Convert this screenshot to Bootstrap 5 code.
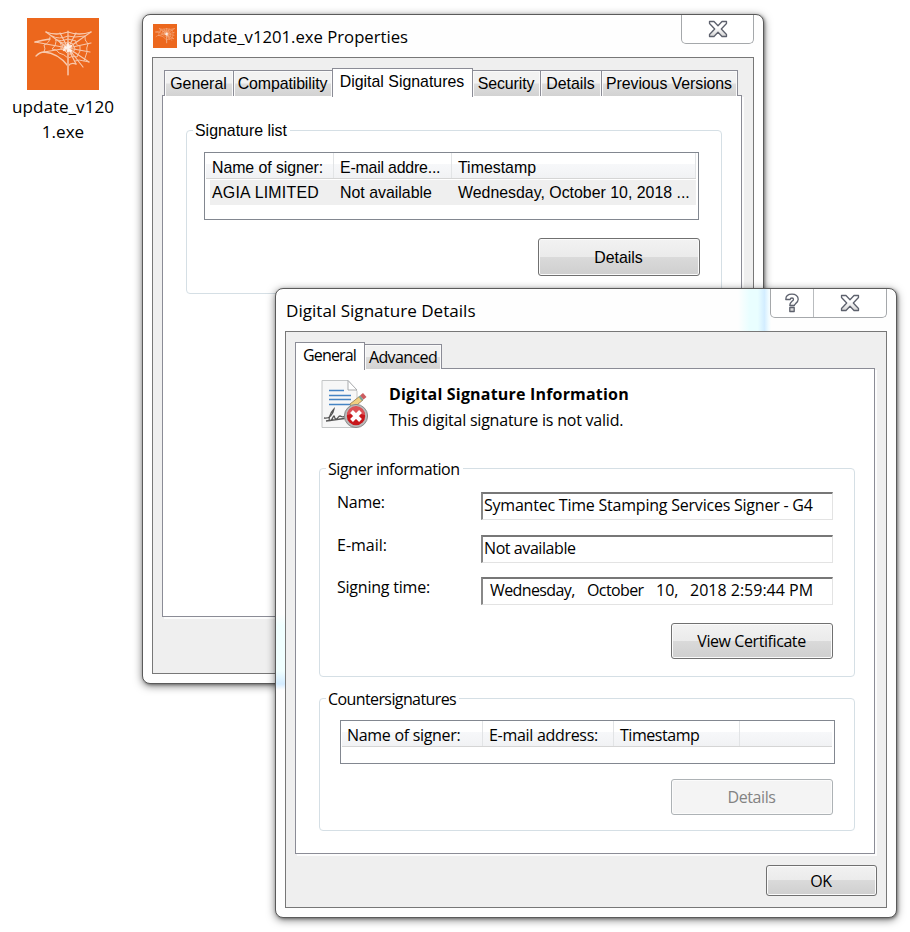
<!DOCTYPE html>
<html lang="en">
<head>
<meta charset="utf-8">
<meta name="viewport" content="width=device-width, initial-scale=1">
<title>Digital Signature Details</title>
<link href="https://cdn.jsdelivr.net/npm/bootstrap@5.3.0/dist/css/bootstrap.min.css" rel="stylesheet">
<style>
  body { width: 910px; height: 932px; overflow: hidden; background: #fff; color: #000; font: 16px/20px "Open Sans", "Noto Sans", sans-serif; }
  /* desktop */
  .shortcut { left: 8px; top: 18px; width: 110px; font: 17.1px/25px "Open Sans", sans-serif; }
  .shortcut-label { margin-top: 4px; }
  /* window chrome */
  .win { border: 1px solid #5a5a5a; border-radius: 8px; background: #fefefe; box-shadow: 0 2px 8px rgba(0,0,0,.5), 1px 1px 3px rgba(0,0,0,.35); padding: 0 9px 9px; width: 622px; }
  .win-props { left: 142px; top: 14px; height: 670px; }
  .win-sig { left: 275px; top: 288px; height: 630px;
    background:
      linear-gradient(90deg, transparent, #e9feff 35%, #e9feff 60%, #d3edff 80%, #effbff 92%, transparent) 462px 0 / 33px 43px no-repeat,
      linear-gradient(180deg, transparent, #f0ffff 15%, #f0ffff 75%, #d3ebff 92%, transparent) 0 325px / 10px 76px no-repeat,
      #fefefe; }
  .titlebar { height: 42px; font-size: 17.1px; line-height: 24px; }
  .titlebar-text { padding-top: 10px; }
  .win-props .titlebar-text { font-size: 16.7px; padding-left: 5px; }
  .win-sig .titlebar-text { padding-left: 1px; }
  .caption-btns { border: 1px solid #a5a8ab; border-top: 0; border-radius: 0 0 5px 5px; height: 29px; background: rgba(255,255,255,.75); }
  .cap-close { width: 71px; height: 28px; }
  .win-sig .cap-close { width: 72px; }
  .cap-help { width: 43px; height: 28px; border-right: 1px solid #b9bcbf; }
  .client { border: 1px solid #777; background: #efefef; padding: 10px 9px 0; flex: 1; }
  /* tabs */
  .tab-strip { height: 27px; margin-bottom: -1px; }
  .tab-item { border: 1px solid #8b8c96; border-bottom: 0; background: linear-gradient(#f2f2f2 0 48%, #dedede 52%, #d2d2d2); box-shadow: inset 1px 1px #fafafa, inset -1px 0 #fafafa; height: 25px; text-align: center; padding: 2px 1px 0 0; margin-right: -1px; white-space: nowrap; }
  .tab-on { height: 28px; background: #fff; z-index: 1; box-shadow: none; padding-top: 3px; }
  .tab-page { width: 580px; border: 1px solid #8b8c96; background: #fff; box-shadow: 2px 2px #fcfcfc; padding: 0 19px 0 23px; }
  .groupbox { width: 536px; border: 1px solid #d5dfe5; border-radius: 4px; }
  .group-title { display: block; width: max-content; margin: -10px 0 0 6px; padding: 0 3px 0 2px; background: #fff; }
  /* buttons */
  .win-btn { border: 1px solid #707070; border-radius: 3px; width: 162px; height: 36px; padding: 0 1px 0 0; background: linear-gradient(#f2f2f2, #ebebeb 49%, #dadada 50%, #cfcfcf); box-shadow: inset 0 0 0 1px #fbfbfb; font: inherit; color: #000; }
  .win-btn:disabled { background: #f4f4f4; border-color: #adb2b5; color: #838383; opacity: 1; }
  /* list views */
  .listview { width: 495px; border: 1px solid #828790; background: #fff; padding: 0 2px 0 1px; overflow: hidden; }
  .list-head { height: 26px; border-bottom: 1px solid #d5d5d5; background: linear-gradient(#fff 42%, #f7f8fa 43%, #f1f2f4); }
  .list-head > div { border-right: 1px solid #e2e4e6; padding-left: 6px; padding-top: 4px; white-space: nowrap; }
  .list-row { height: 25px; background: #efefef; margin: 1px 0 0 4px; padding-top: 3px; white-space: nowrap; }
  /* the properties window uses the wider system face */
  .arial { font-family: "Liberation Sans", Arial, sans-serif; font-size: 15.9px; }
  .arial .tab-strip { height: 28px; }
  .arial .tab-item { height: 26px; padding-top: 3px; }
  .arial .tab-on { height: 29px; }
  .arial .list-head > div { padding-top: 5px; }
  .arial .win-btn { padding-top: 2px; }
  .field { width: 352px; height: 28px; border: solid; border-width: 2px 1px 1px 2px; border-color: #777 #e3e3e3 #e3e3e3 #888; padding: 1px 0 0 1px; white-space: pre; }
  .field-label { width: 144px; }
  .sp2 { letter-spacing: -.22px; }
  .sp4 { letter-spacing: -.42px; }
  .sp6 { letter-spacing: -.6px; }
  .sp8 { letter-spacing: -.85px; }
</style>
<script src="https://cdn.jsdelivr.net/npm/bootstrap@5.3.0/dist/js/bootstrap.bundle.min.js"></script>
</head>
<body class="position-relative">
<svg width="0" height="0" class="position-absolute">
  <defs>
    <linearGradient id="glyphFill" x1="0" y1="0" x2="0" y2="1"><stop offset=".4" stop-color="#fff"/><stop offset="1" stop-color="#d4d4d4"/></linearGradient>
    <symbol id="web" viewBox="0 0 72 72">
      <rect width="72" height="72" fill="#ec671d"/>
      <g fill="none" stroke="#f8c9ad" stroke-width=".95" stroke-linecap="round">
        <path stroke-width="1.200" d="M41 30 19 14M41 30 33 15M41 30 41 13M41 30 49 15M41 30 64 14M41 30 64 25M41 30 63 34M41 30 62 44M41 30 56 49M41 30 49 46M41 30V57M41 30 17 34M41 30 8 24"/>
        <path stroke-width="1.300" d="M19 14q10 4 22 0 11 4 23 0M8 24q8-2 15-3M9 38q4-4 8-4 14 1 24 14 3-4 8-2"/>
        <path d="M25 18q7 4 16 0l7 1 10-1q-1 4 3 8-2 4-1 8l-3 9q-5-2-9 0M23 19q0 6-6 8 2 4 0 7M29 22q6 2 12-1l8 2q-1 4 4 5l0 5-3 6q-4-2-9 1-4-4-9-5-2-4-7-4 4-3 4-7zM33 24q5 2 8 0l5 2 2 5-3 5h-4q-3-4-7-5 1-4-1-7zM62 44l-5-1M36 27h5l3 2-1 4h-4l-3-3z"/>
        <path stroke="#fff" stroke-width="2.200" opacity=".75" d="M41 26v9M38 29l6 4M37 32l7-4"/>
      </g>
      <path d="M41 34V57" stroke="#f5b08a" stroke-width="2"/>
    </symbol>
    <symbol id="closeX" viewBox="0 0 20 18">
      <path d="M1.500 1.500h4.500L10 5.800l4-4.300h4.500v2L13.300 9l5.200 5.500v2H14L10 12.200 6 16.500H1.500v-2L6.700 9 1.500 3.500z" fill="url(#glyphFill)" stroke="#5d616d" stroke-width="1.300" stroke-linejoin="round"/>
    </symbol>
  </defs>
</svg>

<!-- Desktop shortcut -->
<div class="shortcut position-absolute text-center">
  <svg class="d-block mx-auto" width="72" height="72"><use href="#web"/></svg>
  <div class="shortcut-label">update_v120<br>1.exe</div>
</div>

<!-- File properties window -->
<section class="win win-props position-absolute d-flex flex-column">
  <header class="titlebar d-flex align-items-start">
    <svg class="flex-shrink-0" width="24" height="24" style="margin:9px 0 0 1px"><use href="#web"/></svg>
    <div class="titlebar-text flex-grow-1">update_v1201.exe Properties</div>
    <div class="caption-btns d-flex"><span class="cap-close d-flex align-items-center justify-content-center"><svg width="20" height="18"><use href="#closeX"/></svg></span></div>
  </header>
  <div class="client">
    <div class="arial">
      <nav class="tab-strip d-flex align-items-end" style="padding-left:2px">
        <div class="tab-item" style="width:70px">General</div>
        <div class="tab-item" style="width:100px;letter-spacing:-.1px">Compatibility</div>
        <div class="tab-item tab-on align-self-start" style="width:141px">Digital Signatures</div>
        <div class="tab-item" style="width:69px;letter-spacing:-.1px">Security</div>
        <div class="tab-item" style="width:62px">Details</div>
        <div class="tab-item" style="width:137px;letter-spacing:-.07px">Previous Versions</div>
      </nav>
      <div class="tab-page" style="height:522px;padding-top:34px">
        <div class="groupbox" style="height:164px">
          <span class="group-title">Signature list</span>
          <div class="listview" style="height:68px;margin:11px 0 0 17px">
            <div class="list-head d-flex">
              <div style="width:128px;letter-spacing:-.07px">Name of signer:</div>
              <div style="width:118px;letter-spacing:-.2px">E-mail addre...</div>
              <div class="flex-grow-1">Timestamp</div>
            </div>
            <div class="list-row d-flex">
              <div style="width:129px;padding-left:2px;letter-spacing:.23px">AGIA LIMITED</div>
              <div style="width:118px;padding-left:1px">Not available</div>
              <div style="padding-left:1px">Wednesday, October 10, 2018 ...</div>
            </div>
          </div>
          <button class="btn win-btn d-block ms-auto" style="height:38px;margin-top:18px;margin-right:21px">Details</button>
        </div>
      </div>
    </div>
  </div>
</section>

<!-- Signature details window -->
<section class="win win-sig position-absolute d-flex flex-column">
  <header class="titlebar d-flex align-items-start">
    <div class="titlebar-text flex-grow-1">Digital Signature Details</div>
    <div class="caption-btns d-flex">
      <span class="cap-help d-flex align-items-center justify-content-center"><svg width="16" height="20" viewBox="0 0 16 20"><path d="M1.800 6.500C1.800 3 4.500 1.200 8 1.200s6.200 1.700 6.200 5c0 2.600-1.400 3.700-2.800 4.700-.8.600-1 .9-1 1.600H5.800c0-2.200.8-3.100 2.200-4.200 1-.7 1.500-1.100 1.500-1.900S9 5 8 5 6.200 5.500 6.200 6.500zM5.800 14.500h4.400v4H5.800z" fill="url(#glyphFill)" stroke="#5d616d" stroke-width="1.300" stroke-linejoin="round"/></svg></span>
      <span class="cap-close d-flex align-items-center justify-content-center"><svg width="20" height="18"><use href="#closeX"/></svg></span>
    </div>
  </header>
  <div class="client">
    <nav class="tab-strip d-flex align-items-end">
      <div class="tab-item tab-on align-self-start sp8" style="width:70px;padding-top:2px">General</div>
      <div class="tab-item sp6" style="width:78px;padding-right:0">Advanced</div>
    </nav>
    <div class="tab-page" style="height:486px">
      <div class="d-flex" style="height:99px;padding-top:11px">
        <svg class="flex-shrink-0" width="50" height="50" viewBox="0 0 50 50" style="margin-left:1px">
          <path d="M2 .5h26l9 10.500V47.500H2z" fill="#f7f7f7" stroke="#c4c6c7"/>
          <path d="M28 .5v9.500h9z" fill="#fff" stroke="#a9abad"/>
          <path d="M9 10.500h15M9 15.500h22M9 19.500h22M9 24.500h21" stroke="#4584c4" stroke-width="1.500"/>
          <path d="M4 38c5 1 9-3 10-9-4 4-6 11-4 12 2 0 3-5 4-5s0 3 2 3 2-3 4-3 1 2 6 0M6 41l22-3" fill="none" stroke="#555" stroke-width="1.300"/>
          <path d="M30 24 40 16l3 4-11 9z" fill="#f1cf80" stroke="#8e7445" stroke-width=".8"/>
          <path d="M40 15.500l3-2.500 3.500 4-3 2.500z" fill="#cc5d60"/><path d="M38.500 16.800l1.800-1.300 3 4.300-1.800 1z" fill="#7ba69b"/>
          <circle cx="36" cy="36" r="11.600" fill="#b9b9b9" stroke="#8b8b8b"/>
          <circle cx="36" cy="36" r="9.200" fill="#c8171c"/>
          <path d="M27 35a9 9 0 0 1 18 0q-9-3-18 0z" fill="#dc5155"/>
          <path d="M31.500 31.500l9 9m0-9-9 9" stroke="#fff" stroke-width="4"/>
        </svg>
        <div style="margin-left:19px;margin-top:4px">
          <div class="fw-bold" style="letter-spacing:.19px">Digital Signature Information</div>
          <div class="sp2" style="margin-top:6px">This digital signature is not valid.</div>
        </div>
      </div>
      <div class="groupbox" style="height:209px">
        <span class="group-title sp4">Signer information</span>
        <div style="margin:13px 21px 0 17px">
          <div class="d-flex"><label class="field-label sp2">Name:</label><div class="field sp2">Symantec Time Stamping Services Signer - G4</div></div>
          <div class="d-flex" style="margin-top:15px"><label class="field-label">E-mail:</label><div class="field sp4">Not available</div></div>
          <div class="d-flex" style="margin-top:14px"><label class="field-label sp2">Signing time:</label><div class="field d-flex" style="padding-left:7px"><span class="sp6" style="width:97px">Wednesday,</span><span class="sp6" style="width:69px">October</span><span style="width:34px">10,</span><span>2018 2:59:44 PM</span></div></div>
          <button class="btn win-btn d-block ms-auto sp4" style="margin-top:18px">View Certificate</button>
        </div>
      </div>
      <div class="groupbox" style="height:133px;margin-top:21px">
        <span class="group-title sp6">Countersignatures</span>
        <div class="listview" style="height:44px;margin:11px 0 0 20px">
          <div class="list-head d-flex" style="letter-spacing:-.3px">
            <div style="width:141px;padding-left:5px">Name of signer:</div>
            <div style="width:131px">E-mail address:</div>
            <div style="width:126px;letter-spacing:-.45px">Timestamp</div>
          </div>
        </div>
        <button class="btn win-btn d-block ms-auto sp4" style="margin-top:15px;margin-right:21px" disabled>Details</button>
      </div>
    </div>
    <button class="btn win-btn d-block ms-auto sp4" style="width:111px;height:31px;margin-top:11px">OK</button>
  </div>
</section>
</body>
</html>
